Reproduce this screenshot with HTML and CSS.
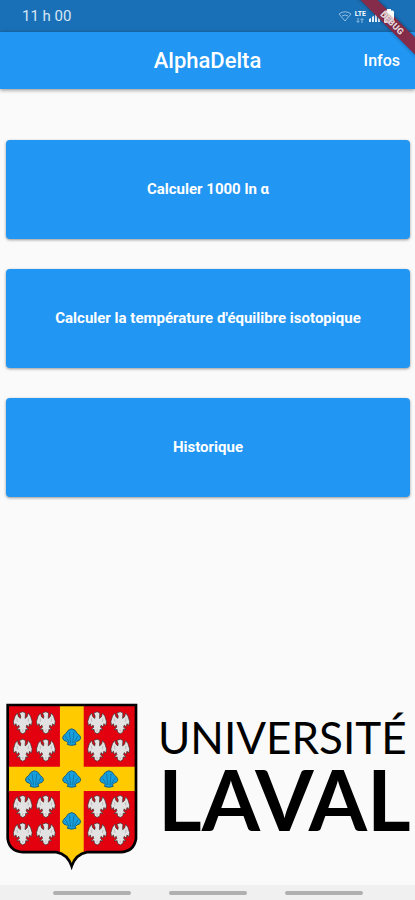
FILE: index.html
```html
<!DOCTYPE html>
<html lang="fr">
<head>
<meta charset="UTF-8">
<meta name="viewport" content="width=device-width, initial-scale=1.0">
<title>AlphaDelta</title>
<link rel="stylesheet" href="styles.css">
</head>
<body>
<div class="app">
  <div class="status-bar">
    <span class="time">11 h 00</span>
    <div class="status-icons">
      <svg class="wifi" width="14" height="12" viewBox="0 0 14 12" fill="none" stroke="#8fbbe0">
        <path d="M1 4 Q7 -0.5 13 4 L7 11 Z"/>
        <path d="M4 6 Q7 4 10 6"/>
      </svg>
      <div class="network">
        <b>LTE</b>
        <svg width="8" height="5" viewBox="0 0 8 5" fill="none" stroke="#8fbbe0">
          <path d="M2 0 V4 M0.5 3 L2 4.5 L3.5 3 M6 5 V1 M4.5 2 L6 0.5 L7.5 2"/>
        </svg>
      </div>
      <svg width="12" height="12" viewBox="0 0 12 12">
        <path d="M0 12 V9 L2 8 V12 Z M3 12 V7 L5 5.5 V12 Z M6 12 V4.5 L8 3 V12 Z M9 12 V2 L11 0.5 V12 Z" fill="#e4eefa"/>
      </svg>
      <svg class="battery" width="10" height="14" viewBox="0 0 10 14">
        <path d="M3 0 H7 V1.5 H8.5 Q10 1.5 10 3 V12.5 Q10 14 8.5 14 H1.5 Q0 14 0 12.5 V3 Q0 1.5 1.5 1.5 H3 Z" fill="#fff"/>
      </svg>
    </div>
  </div>
  <header class="app-bar">
    <h1>AlphaDelta</h1>
    <button class="infos">Infos</button>
  </header>
  <div class="corner ribbon"></div>
  <div class="corner debug">DEBUG</div>

  <main>
    <div class="menu">
      <button>Calculer 1000 ln α</button>
      <button>Calculer la température d'équilibre isotopique</button>
      <button>Historique</button>
    </div>

    <div class="logo">
      <svg class="shield" viewBox="20 25 394 498">
        <defs>
          <clipPath id="shape">
            <path d="M25 31 H408 V430 Q402 468 362 470 H262 Q228 476 216 512 Q204 476 170 470 H70 Q30 468 25 430 Z"/>
          </clipPath>
          <g id="bird" stroke="#333" stroke-width="2" stroke-linejoin="round">
            <path fill="#e2e2e2" d="M-6 -20 L-10 -29 L0 -33 L8 -29 L7 -13 L13 -18 L16 -29 L23 -20 L28 -4 L26 8 L20 3 L18 13 L12 7 L10 13 L17 21 L9 20 L8 28 L0 33 L-8 28 L-9 20 L-18 21 L-10 13 L-12 7 L-18 13 L-20 3 L-26 8 L-28 -4 L-23 -20 L-16 -29 L-13 -18 L-7 -13 Z"/>
            <path fill="none" stroke="#aaa" d="M-17 -13 L-16 -3 M17 -13 L16 -3 M0 20 V27"/>
          </g>
          <g id="birds">
            <use href="#bird" x="70" y="84"/>
            <use href="#bird" x="139" y="84"/>
            <use href="#bird" x="70" y="166"/>
            <use href="#bird" x="139" y="166"/>
          </g>
          <g id="shell" stroke="#12506f" stroke-width="2.5" stroke-linejoin="round">
            <path fill="#169fdf" d="M0 -25 Q12 -23 17 -11 Q27 -5 27 3 Q24 12 16 12 L11 17 L13 22 Q0 27 -13 22 L-11 17 L-16 12 Q-24 12 -27 3 Q-27 -5 -17 -11 Q-12 -23 0 -25 Z"/>
            <path fill="none" stroke-width="1.5" d="M-3 18 L-7 -16 M3 18 L7 -16 M-7 17 L-19 -4 M7 17 L19 -4"/>
          </g>
        </defs>
        <g clip-path="url(#shape)">
          <path fill="#e3000f" d="M20 25 H414 V530 H20 Z"/>
          <path fill="#ffcb00" d="M181 25 H252 V215 H414 V288 H252 V530 H181 V288 H20 V215 H181 Z"/>
        </g>
        <path fill="none" stroke="#000" stroke-width="8" d="M25 31 H408 V430 Q402 468 362 470 H262 Q228 476 216 512 Q204 476 170 470 H70 Q30 468 25 430 Z"/>
        <use href="#birds"/>
        <use href="#birds" x="222"/>
        <use href="#birds" y="250"/>
        <use href="#birds" x="222" y="250"/>
        <use href="#shell" x="216" y="127"/>
        <use href="#shell" x="105" y="252"/>
        <use href="#shell" x="216" y="252"/>
        <use href="#shell" x="327" y="252"/>
        <use href="#shell" x="216" y="377"/>
      </svg>
      <div class="wordmark">
        <span class="universite">UNIVERSITÉ</span>
        <span class="laval">LAVAL</span>
      </div>
    </div>
  </main>

  <div class="nav-bar">
    <span></span>
    <span></span>
    <span></span>
  </div>
</div>
</body>
</html>
```
FILE: styles.css
```css
body {
  margin: 0;
  background-color: #fafafa;
  font-family: Roboto, sans-serif;
}

button {
  font-family: inherit;
  border: none;
  color: white;
  background-color: #2196f3;
  cursor: pointer;
}

.app {
  position: relative;
  overflow: hidden;
  min-height: 100vh;
  display: flex;
  flex-direction: column;
}

.status-bar {
  height: 32px;
  padding: 0 21px 0 22px;
  display: flex;
  justify-content: space-between;
  align-items: center;
  background-color: #1a70b7;
}

.time {
  font-size: 15px;
  line-height: 34px;
  color: #d7e6f5;
}

.status-icons {
  display: flex;
  align-items: center;
  gap: 3px;
}

.network {
  display: flex;
  flex-direction: column;
  align-items: center;
  font-size: 7px;
  line-height: 8px;
  color: white;
}

.battery {
  position: relative;
  z-index: 1;
}

.app-bar {
  height: 57px;
  padding: 0 15px;
  display: grid;
  grid-template-columns: 1fr auto 1fr;
  align-items: center;
  background-color: #2196f3;
  color: white;
  box-shadow: 0 1px 4px rgba(0, 0, 0, 0.45);
}

.app-bar h1 {
  grid-column: 2;
  margin: 0;
  font-size: 22px;
  font-weight: 500;
}

.infos {
  justify-self: end;
  padding: 0;
  font-size: 16px;
  font-weight: 500;
}

/* the ribbon goes under the battery, its text over it */
.corner {
  position: absolute;
  top: 17px;
  right: -37px;
  width: 120px;
  height: 12px;
  transform: rotate(45deg);
}

.ribbon {
  background-color: #842c49;
  box-shadow: 0 0 4px rgba(0, 0, 0, 0.4);
}

.debug {
  z-index: 2;
  font-size: 9px;
  font-weight: 900;
  line-height: 12px;
  text-align: center;
  color: #e8d5dc;
  text-shadow: 0 0 2px #5c1f33;
}

main {
  flex: 1;
  display: flex;
  flex-direction: column;
  justify-content: space-between;
  padding: 51px 5px 15px 6px;
}

.menu {
  display: flex;
  flex-direction: column;
  gap: 30px;
}

.menu button {
  padding: 40px 16px;
  font-size: 15px;
  font-weight: 700;
  line-height: 19px;
  border-radius: 4px;
  box-shadow: 0 1px 3px rgba(0, 0, 0, 0.4);
}

.logo {
  display: flex;
  align-items: flex-start;
  gap: 20px;
}

.shield {
  flex: none;
  width: 132px;
}

.wordmark {
  flex: 1;
  padding-top: 8px;
  display: flex;
  flex-direction: column;
  font-family: Lato, sans-serif;
  color: black;
}

.universite {
  font-size: 44px;
  line-height: 53px;
}

.laval {
  font-size: 84px;
  font-weight: bold;
  line-height: 70px;
}

.nav-bar {
  height: 15px;
  display: flex;
  justify-content: center;
  align-items: center;
  gap: 38px;
  background-color: #f0f0f0;
}

.nav-bar span {
  width: 78px;
  height: 4px;
  border-radius: 2px;
  background-color: #b0b0b0;
}
```
